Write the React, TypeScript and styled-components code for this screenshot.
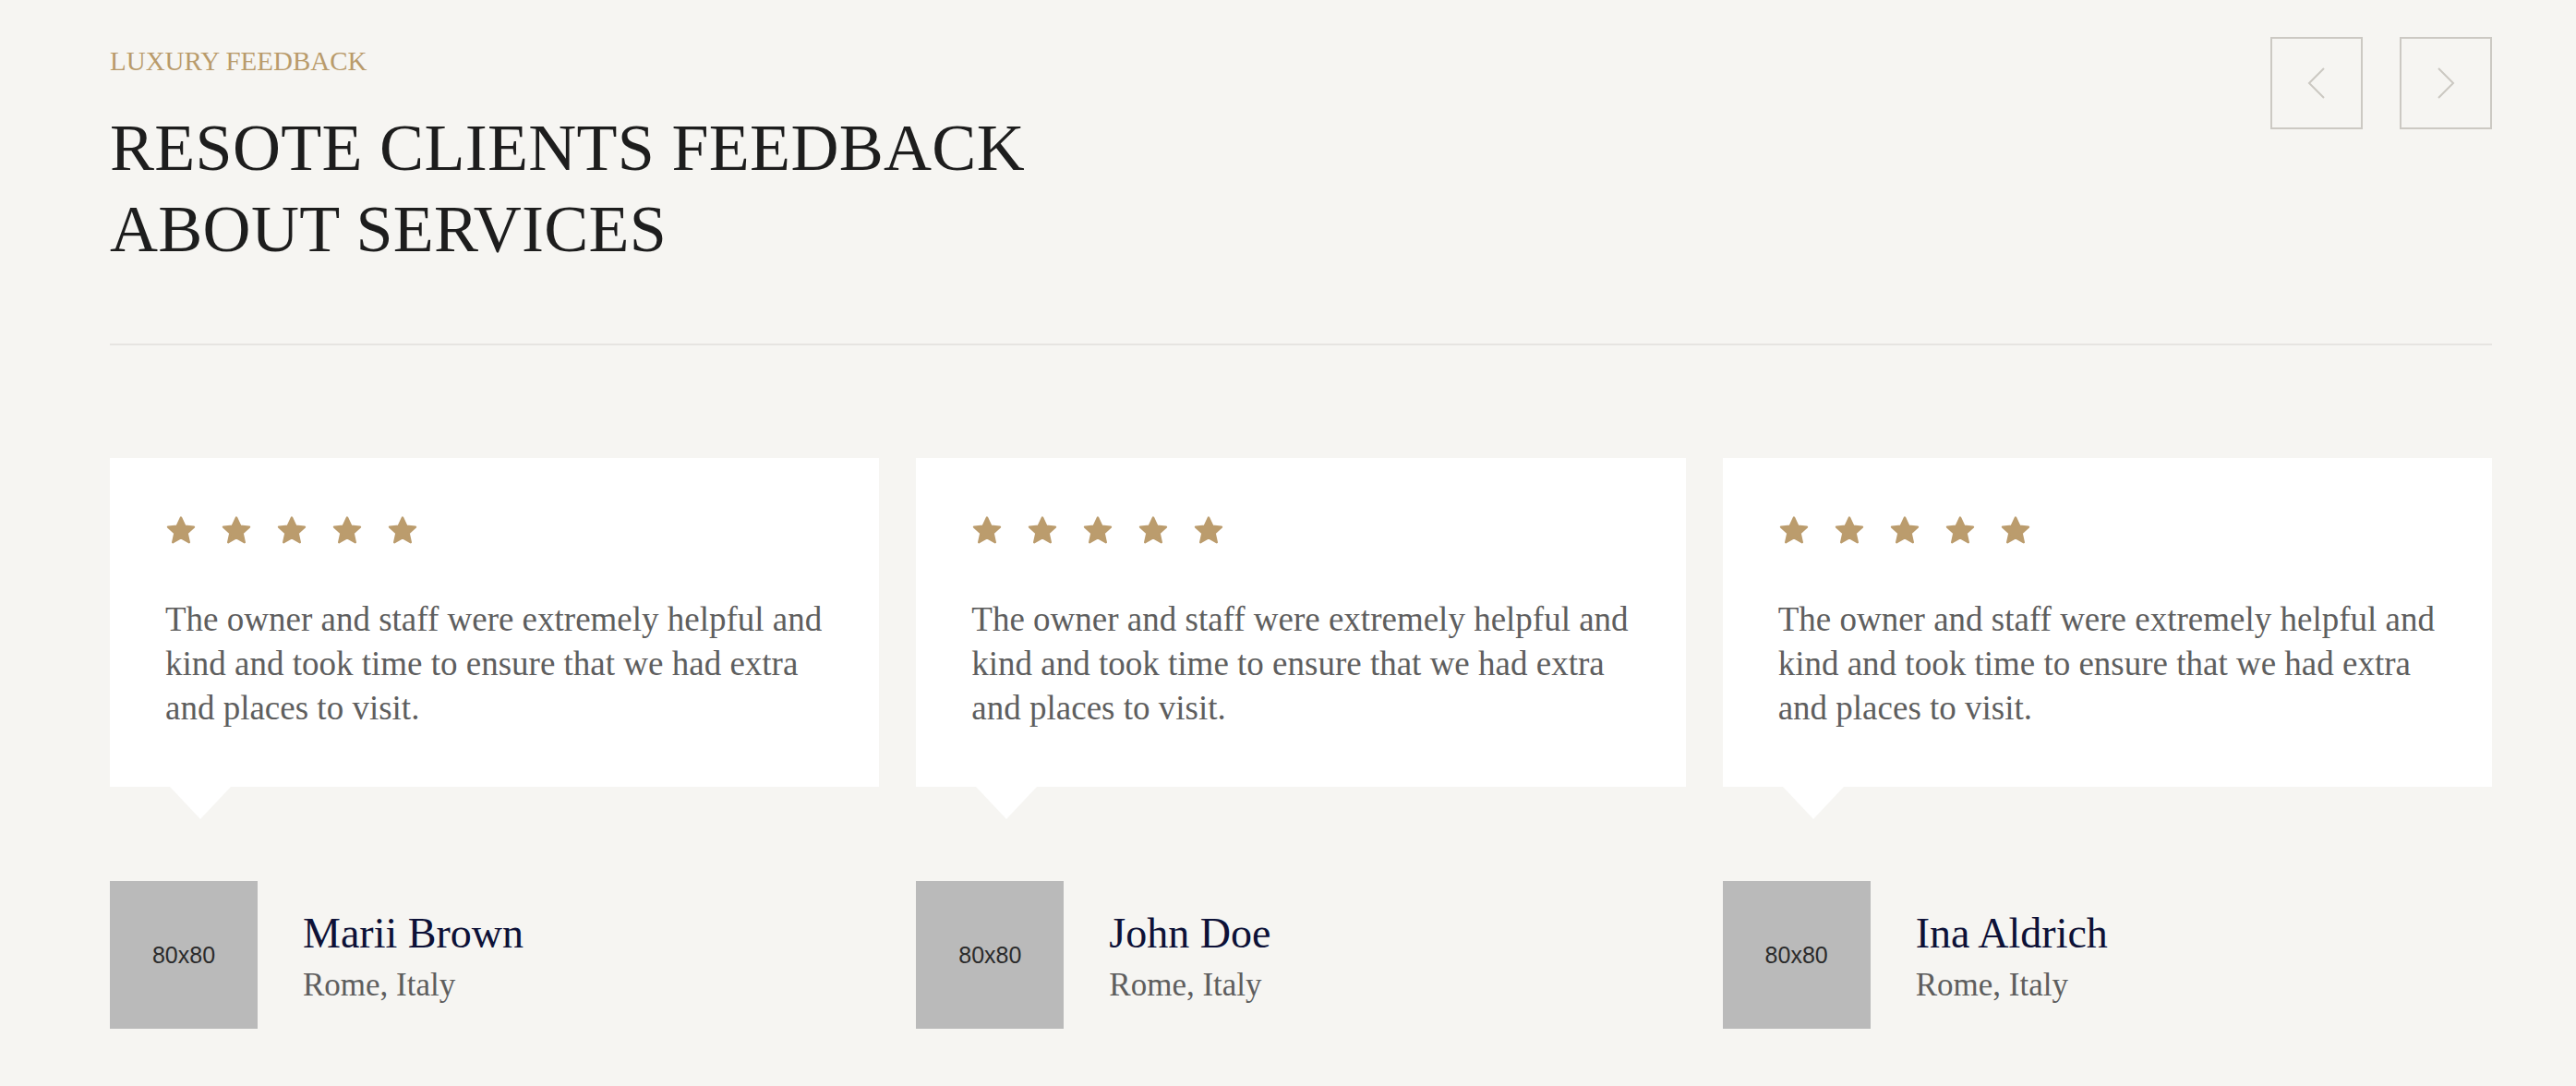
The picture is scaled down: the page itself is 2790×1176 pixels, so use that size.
import styled, { createGlobalStyle } from 'styled-components'

type ReviewType = {
	name: string
	place: string
	text: string
}

const reviews: ReviewType[] = [
	{
		name: 'Marii Brown',
		place: 'Rome, Italy',
		text: 'The owner and staff were extremely helpful and kind and took time to ensure that we had extra and places to visit.',
	},
	{
		name: 'John Doe',
		place: 'Rome, Italy',
		text: 'The owner and staff were extremely helpful and kind and took time to ensure that we had extra and places to visit.',
	},
	{
		name: 'Ina Aldrich',
		place: 'Rome, Italy',
		text: 'The owner and staff were extremely helpful and kind and took time to ensure that we had extra and places to visit.',
	},
]

const GlobalStyle = createGlobalStyle`
	* {
		box-sizing: border-box;
	}
	body {
		margin: 0;
		background: #f6f5f2;
		font-family: 'Liberation Serif', 'Times New Roman', serif;
	}
`

const Star = () => (
	<svg width="34" height="32" viewBox="0 0 34 32">
		<path
			d="M17 2.5 L21.2 11.6 L31 12.6 L23.6 19.3 L25.8 29.2 L17 24.1 L8.2 29.2 L10.4 19.3 L3 12.6 L12.8 11.6 Z"
			fill="#bb9c6d"
			stroke="#bb9c6d"
			strokeWidth="2.4"
			strokeLinejoin="round"
		/>
	</svg>
)

const Chevron = ({ dir }: { dir: 'left' | 'right' }) => (
	<svg width="20" height="34" viewBox="0 0 20 34">
		<path
			d={dir === 'left' ? 'M18 1 L2 17 L18 33' : 'M2 1 L18 17 L2 33'}
			fill="none"
			stroke="#cbc8c2"
			strokeWidth="2"
		/>
	</svg>
)

export default function App() {
	return (
		<>
			<GlobalStyle />
			<Section>
				<Header>
					<TitleBlock>
						<Subtitle>LUXURY FEEDBACK</Subtitle>
						<Heading>
							RESOTE CLIENTS FEEDBACK
							<br />
							ABOUT SERVICES
						</Heading>
					</TitleBlock>
					<NavGroup>
						<NavButton aria-label="previous">
							<Chevron dir="left" />
						</NavButton>
						<NavButton aria-label="next">
							<Chevron dir="right" />
						</NavButton>
					</NavGroup>
				</Header>
				<Divider />
				<Grid>
					{reviews.map((review) => (
						<Item key={review.name}>
							<Card>
								<Stars>
									{[0, 1, 2, 3, 4].map((i) => (
										<Star key={i} />
									))}
								</Stars>
								<Quote>{review.text}</Quote>
							</Card>
							<Author>
								<Avatar>80x80</Avatar>
								<AuthorInfo>
									<Name>{review.name}</Name>
									<Place>{review.place}</Place>
								</AuthorInfo>
							</Author>
						</Item>
					))}
				</Grid>
			</Section>
		</>
	)
}

const Section = styled.section`
	width: 2580px;
	margin-left: 119px;
	padding: 40px 0 62px;
`

const Header = styled.div`
	display: flex;
	justify-content: space-between;
	align-items: flex-start;
`

const TitleBlock = styled.div`
	padding-top: 12px;
`

const Subtitle = styled.div`
	font-size: 29px;
	line-height: 29px;
	color: #b99b6b;
`

const Heading = styled.h2`
	margin: 35px 0 0;
	font-size: 72px;
	line-height: 88px;
	font-weight: 400;
	letter-spacing: 0.3px;
	color: #1d1d1d;
`

const NavGroup = styled.div`
	display: flex;
	gap: 40px;
`

const NavButton = styled.button`
	width: 100px;
	height: 100px;
	display: flex;
	align-items: center;
	justify-content: center;
	background: transparent;
	border: 2px solid #ccc9c3;
	padding: 0;
	cursor: pointer;
`

const Divider = styled.hr`
	margin: 80px 0 0;
	height: 2px;
	border: none;
	background: #e6e4e1;
`

const Grid = styled.div`
	display: grid;
	grid-template-columns: repeat(3, 1fr);
	gap: 40px;
	margin-top: 122px;
`

const Item = styled.div`
	display: flex;
	flex-direction: column;
`

const Card = styled.div`
	position: relative;
	background: #ffffff;
	padding: 62px 50px 61px 60px;

	&::after {
		content: '';
		position: absolute;
		left: 65px;
		top: 100%;
		border-left: 33px solid transparent;
		border-right: 33px solid transparent;
		border-top: 35px solid #ffffff;
	}
`

const Stars = styled.div`
	display: flex;
	gap: 26px;
	height: 32px;
`

const Quote = styled.p`
	margin: 57px 0 0;
	font-size: 37px;
	line-height: 48px;
	color: #5e5e5e;
`

const Author = styled.div`
	display: flex;
	align-items: center;
	gap: 49px;
	margin-top: 102px;
`

const Avatar = styled.div`
	width: 160px;
	height: 160px;
	flex-shrink: 0;
	display: flex;
	align-items: center;
	justify-content: center;
	background: #bababa;
	color: #2b2b2b;
	font-family: 'Liberation Sans', Arial, sans-serif;
	font-size: 25px;
`

const AuthorInfo = styled.div`
	display: flex;
	flex-direction: column;
	padding-top: 6px;
`

const Name = styled.div`
	font-size: 46px;
	line-height: 56px;
	color: #0d1137;
`

const Place = styled.div`
	margin-top: 4px;
	font-size: 35px;
	line-height: 48px;
	color: #5e5e5e;
`
